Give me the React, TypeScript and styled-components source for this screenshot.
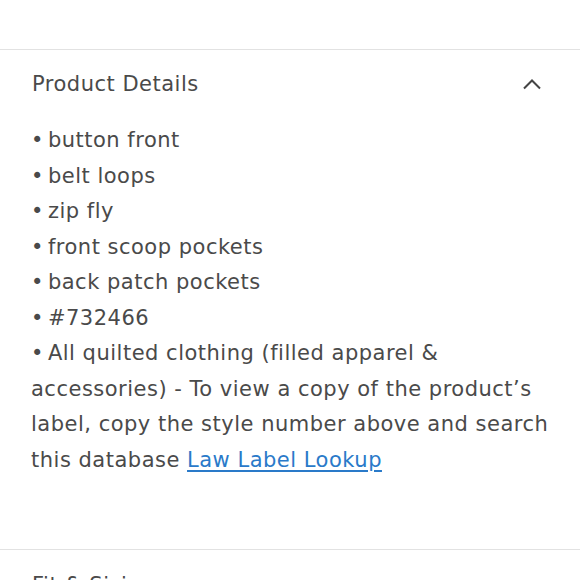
import React from 'react'
import styled, { createGlobalStyle } from 'styled-components'

const TEXT_GREY = '#4a4a4a'
const RULE_GREY = '#e2e2e2'
const LINK_BLUE = '#2a7ac9'

const GlobalStyle = createGlobalStyle`
  html, body {
    margin: 0;
    padding: 0;
    background: #ffffff;
  }
  body {
    font-family: "DejaVu Sans", "Open Sans", sans-serif;
    color: ${TEXT_GREY};
  }
`

const Page = styled.div`
  width: 580px;
  height: 580px;
  overflow: hidden;
  padding-top: 49px;
  box-sizing: border-box;
`

const Section = styled.section`
  border-top: 1px solid ${RULE_GREY};
`

const Header = styled.div<{ open: boolean }>`
  display: flex;
  align-items: center;
  justify-content: space-between;
  padding: ${(props) => (props.open ? '14px' : '20px')} 38px 0 32px;
  height: ${(props) => (props.open ? '54px' : '50px')};
  box-sizing: border-box;
`

const Title = styled.h2`
  margin: 0;
  font-size: 21px;
  line-height: 30px;
  font-weight: 400;
  letter-spacing: 0.5px;
  color: ${TEXT_GREY};
`

const Chevron = styled.svg`
  display: block;
  width: 20px;
  height: 12px;
`

const Body = styled.div`
  padding: 19px 24px 71px 31px;
  font-size: 21px;
  line-height: 35.5px;
  letter-spacing: 0.5px;
`

const Item = styled.div``

const Link = styled.a`
  color: ${LINK_BLUE};
  text-decoration: underline;
  text-underline-offset: 3px;
`

const details = [
  'button front',
  'belt loops',
  'zip fly',
  'front scoop pockets',
  'back patch pockets',
  '#732466',
]

const BULLET = '•\u2006'

export default function App() {
  return (
    <Page>
      <GlobalStyle />
      <Section>
        <Header open>
          <Title>Product Details</Title>
          <Chevron viewBox="0 0 20 12" fill="none">
            <path d="M2 10.5 L10 2.5 L18 10.5" stroke="#444" strokeWidth="2" />
          </Chevron>
        </Header>
        <Body>
          {details.map((d) => (
            <Item key={d}>
              {BULLET}
              {d}
            </Item>
          ))}
          <Item>
            {BULLET}All quilted clothing (filled apparel &amp; accessories) - To
            view a copy of the product’s label, copy the style number above and
            search this database <Link href="#">Law Label Lookup</Link>
          </Item>
        </Body>
      </Section>
      <Section>
        <Header open={false}>
          <Title>Fit &amp; Sizing</Title>
        </Header>
      </Section>
    </Page>
  )
}
